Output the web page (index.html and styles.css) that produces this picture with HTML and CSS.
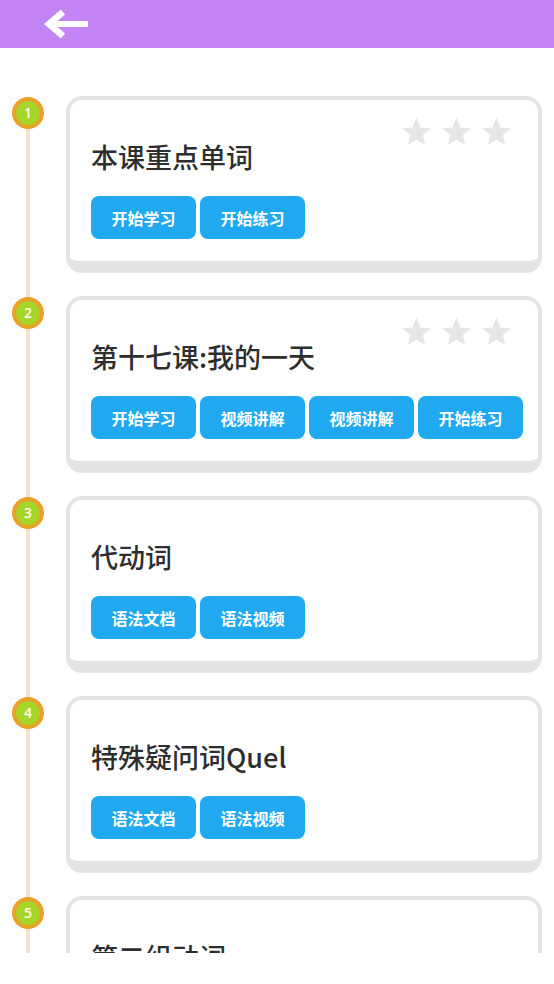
FILE: index.html
```html
<!DOCTYPE html>
<html lang="zh">
<head>
  <meta charset="UTF-8">
  <meta name="viewport" content="width=device-width, initial-scale=1.0">
  <title>课程列表</title>
  <link rel="stylesheet" href="styles.css">
</head>
<body>
  <div class="page">
    <!-- 顶部栏 -->
    <div class="topbar">
      <svg class="back" viewBox="0 0 44 32" width="44" height="32">
        <path d="M19 4 L5 16 L19 28" fill="none" stroke="#fff" stroke-width="6.5"/>
        <path d="M5 16 H44" fill="none" stroke="#fff" stroke-width="6"/>
      </svg>
    </div>

    <!-- 课程列表 -->
    <div class="list">
      <div class="item">
        <div class="rail"><div class="dot">1</div><div class="stem"></div></div>
        <div class="card">
          <div class="stars">
            <svg class="star" viewBox="2 2 20 19"><path d="M12 17.27L18.18 21l-1.64-7.03L22 9.24l-7.19-.61L12 2 9.19 8.63 2 9.24l5.46 4.73L5.82 21z"/></svg>
            <svg class="star" viewBox="2 2 20 19"><path d="M12 17.27L18.18 21l-1.64-7.03L22 9.24l-7.19-.61L12 2 9.19 8.63 2 9.24l5.46 4.73L5.82 21z"/></svg>
            <svg class="star" viewBox="2 2 20 19"><path d="M12 17.27L18.18 21l-1.64-7.03L22 9.24l-7.19-.61L12 2 9.19 8.63 2 9.24l5.46 4.73L5.82 21z"/></svg>
          </div>
          <div class="title">本课重点单词</div>
          <div class="btns">
            <button class="btn">开始学习</button>
            <button class="btn">开始练习</button>
          </div>
        </div>
      </div>

      <div class="item">
        <div class="rail"><div class="dot">2</div><div class="stem"></div></div>
        <div class="card">
          <div class="stars">
            <svg class="star" viewBox="2 2 20 19"><path d="M12 17.27L18.18 21l-1.64-7.03L22 9.24l-7.19-.61L12 2 9.19 8.63 2 9.24l5.46 4.73L5.82 21z"/></svg>
            <svg class="star" viewBox="2 2 20 19"><path d="M12 17.27L18.18 21l-1.64-7.03L22 9.24l-7.19-.61L12 2 9.19 8.63 2 9.24l5.46 4.73L5.82 21z"/></svg>
            <svg class="star" viewBox="2 2 20 19"><path d="M12 17.27L18.18 21l-1.64-7.03L22 9.24l-7.19-.61L12 2 9.19 8.63 2 9.24l5.46 4.73L5.82 21z"/></svg>
          </div>
          <div class="title">第十七课:我的一天</div>
          <div class="btns">
            <button class="btn">开始学习</button>
            <button class="btn">视频讲解</button>
            <button class="btn">视频讲解</button>
            <button class="btn">开始练习</button>
          </div>
        </div>
      </div>

      <div class="item">
        <div class="rail"><div class="dot">3</div><div class="stem"></div></div>
        <div class="card">
          <div class="title">代动词</div>
          <div class="btns">
            <button class="btn">语法文档</button>
            <button class="btn">语法视频</button>
          </div>
        </div>
      </div>

      <div class="item">
        <div class="rail"><div class="dot">4</div><div class="stem"></div></div>
        <div class="card">
          <div class="title">特殊疑问词Quel</div>
          <div class="btns">
            <button class="btn">语法文档</button>
            <button class="btn">语法视频</button>
          </div>
        </div>
      </div>

      <div class="item">
        <div class="rail"><div class="dot">5</div><div class="stem"></div></div>
        <div class="card">
          <div class="title">第二组动词</div>
        </div>
      </div>
    </div>
  </div>
</body>
</html>
```

FILE: styles.css
```css
body {
  margin: 0;
  background: #fff;
  font-family: 'Noto Sans', 'Noto Sans CJK SC', sans-serif;
}

/* 页面容器，底部被截断 */
.page {
  height: 953px;
  overflow: hidden;
}

/* 顶部栏 */
.topbar {
  height: 48px;
  background-color: #c384f6;
  padding-left: 44px;
  display: flex;
  align-items: center;
}

.back {
  display: block;
}

/* 列表 */
.list {
  padding-top: 48px;
}

.item {
  display: flex;
  padding-bottom: 23px;
}

/* 时间轴 */
.rail {
  width: 56px;
  margin-right: 10px;
  display: flex;
  flex-direction: column;
  align-items: center;
  padding-top: 1px;
  flex-shrink: 0;
}

.dot {
  width: 24px;
  height: 24px;
  border: 4px solid #eba128;
  border-radius: 50%;
  background-color: #a6d62a;
  color: #fff;
  font-size: 14px;
  font-weight: 500;
  line-height: 24px;
  text-align: center;
  flex-shrink: 0;
}

.stem {
  flex: 1;
  width: 4px;
  margin-bottom: -24px;
  background-color: #f1e3cf;
}

/* 卡片 */
.card {
  position: relative;
  width: 476px;
  min-height: 177px;
  box-sizing: border-box;
  border: 4px solid #e4e4e4;
  border-bottom-width: 12px;
  border-radius: 16px;
  background: #fff;
  padding: 39px 12px 22px 21px;
}

.stars {
  position: absolute;
  top: 18px;
  right: 26px;
  display: flex;
  gap: 9px;
}

.star {
  width: 31px;
  height: 27px;
  fill: #e6e6e6;
}

.title {
  font-family: 'Noto Sans CJK SC', sans-serif;
  font-size: 27px;
  line-height: 36px;
  font-weight: 500;
  color: #2e2e2e;
}

.btns {
  display: flex;
  gap: 4px;
  margin-top: 21px;
}

.btn {
  flex-shrink: 0;
  width: 105px;
  height: 43px;
  border: none;
  border-radius: 8px;
  background-color: #20a9f0;
  color: #fff;
  font-family: 'Noto Sans CJK SC', sans-serif;
  font-size: 16px;
  font-weight: bold;
  padding: 0;
}
```
